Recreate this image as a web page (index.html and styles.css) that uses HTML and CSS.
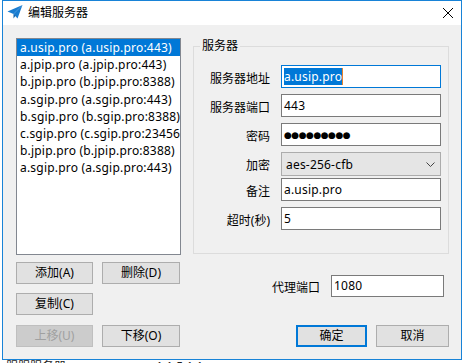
FILE: index.html
```html
<!DOCTYPE html>
<html lang="zh-CN">
<head>
    <meta charset="UTF-8">
    <title>编辑服务器</title>
    <link rel="stylesheet" href="styles.css">
</head>
<body>
    <div class="window">
        <div class="titlebar">
            <svg class="app_icon" width="16" height="16" viewBox="0 0 16 16">
                <path d="M0.5 7.5 L15.5 1 L6.5 10 Z" fill="#1a7dd0"/>
                <path d="M6.5 10 L15.5 1 L10.5 14.5 Z" fill="#1a7dd0"/>
                <path d="M6.5 10 L6.5 14.5 L8.5 11.8 Z" fill="#0f5fa6"/>
            </svg>
            <span class="title">编辑服务器</span>
            <svg class="close" width="10" height="10" viewBox="0 0 10 10">
                <path d="M0 0 L10 10 M10 0 L0 10" stroke="#000" stroke-width="1"/>
            </svg>
        </div>
        <div class="content">
            <div class="left">
                <ul class="server_list">
                    <li class="selected">a.usip.pro (a.usip.pro:443)</li>
                    <li>a.jpip.pro (a.jpip.pro:443)</li>
                    <li>b.jpip.pro (b.jpip.pro:8388)</li>
                    <li>a.sgip.pro (a.sgip.pro:443)</li>
                    <li>b.sgip.pro (b.sgip.pro:8388)</li>
                    <li>c.sgip.pro (c.sgip.pro:23456)</li>
                    <li>b.jpip.pro (b.jpip.pro:8388)</li>
                    <li>a.sgip.pro (a.sgip.pro:443)</li>
                </ul>
                <div class="list_buttons">
                    <button class="btn">添加(A)</button>
                    <button class="btn">删除(D)</button>
                    <button class="btn">复制(C)</button>
                    <span></span>
                    <button class="btn move" disabled>上移(U)</button>
                    <button class="btn move">下移(O)</button>
                </div>
            </div>
            <div class="right">
                <fieldset class="group">
                    <legend>服务器</legend>
                    <div class="fields">
                        <label>服务器地址</label>
                        <div class="box focused"><span class="sel">a.usip.pro</span><span class="caret"></span></div>
                        <label>服务器端口</label>
                        <div class="box">443</div>
                        <label>密码</label>
                        <div class="box dots">●●●●●●●●●</div>
                        <label>加密</label>
                        <div class="combo">
                            <span>aes-256-cfb</span>
                            <svg width="9" height="5" viewBox="0 0 9 5">
                                <polyline points="0.5,0.5 4.5,4.5 8.5,0.5" fill="none" stroke="#444" stroke-width="1"/>
                            </svg>
                        </div>
                        <label class="after_combo">备注</label>
                        <div class="box after_combo">a.usip.pro</div>
                        <label>超时(秒)</label>
                        <div class="box">5</div>
                    </div>
                </fieldset>
                <div class="proxy_row">
                    <label>代理端口</label>
                    <div class="box proxy">1080</div>
                </div>
                <div class="dialog_buttons">
                    <button class="btn ok">确定</button>
                    <button class="btn cancel">取消</button>
                </div>
            </div>
        </div>
    </div>
    <div class="desktop">
        <span class="frag1">服服服务器</span>
        <span class="frag2">1.1.5.1.1</span>
    </div>
</body>
</html>
```
FILE: styles.css
```css
*{
    margin:0;
    padding:0;
    box-sizing: border-box;
}
body{
    background: #fff;
    font-family: "Noto Sans", "Noto Sans CJK SC", sans-serif;
    font-size: 12px;
    color: #000;
    overflow: hidden;
}
li{
    list-style: none;
}
.window{
    margin-left: 2px;
    width: 460px;
    height: 360px;
    border: 1px solid #1883d7;
    background: #f0f0f0;
}
.titlebar{
    height: 24px;
    background: #fff;
    display: flex;
    align-items: center;
    padding-left: 4px;
    padding-right: 8px;
}
.app_icon{
    margin-top: -2px;
}
.title{
    margin-left: 5px;
    line-height: 16px;
}
.close{
    margin-left: auto;
    margin-top: -1px;
}
.content{
    display: flex;
    gap: 12px;
    padding: 13px 12px 0 13px;
}
.left{
    width: 165px;
}
.server_list{
    height: 217px;
    background: #fff;
    border: 1px solid #828790;
    overflow: hidden;
    letter-spacing: 0.2px;
}
.server_list li{
    height: 17.2px;
    line-height: 17px;
    padding-left: 3px;
    white-space: nowrap;
}
.server_list li.selected{
    background: #0078d7;
    color: #fff;
}
.btn{
    font-family: "Noto Sans", "Noto Sans CJK SC", sans-serif;
    font-size: 12px;
    background: #e1e1e1;
    border: 1px solid #adadad;
    color: #000;
    height: 22px;
    line-height: 18px;
}
.btn:disabled{
    background: #cccccc;
    border-color: #bfbfbf;
    color: #a0a0a0;
}
.list_buttons{
    margin-top: 7px;
    display: grid;
    grid-template-columns: 77px 78px;
    grid-template-rows: 22px 22px 22px;
    column-gap: 9px;
    row-gap: 9px;
}
.list_buttons .move{
    margin-top: 1px;
}
.right{
    width: 256px;
}
.group{
    border: 1px solid #dcdcdc;
    padding: 11px 0 23px 0;
}
.group legend{
    margin-left: 6px;
    padding: 0 2px;
    line-height: 16px;
}
.fields{
    display: grid;
    grid-template-columns: 76px 160px;
    column-gap: 11px;
    row-gap: 6px;
    align-items: center;
}
.fields label{
    text-align: right;
    padding-top: 2px;
    white-space: nowrap;
}
.fields .after_combo{
    margin-top: -4px;
}
.box{
    height: 23px;
    background: #fff;
    border: 1px solid #7a7a7a;
    padding-left: 2px;
    line-height: 20px;
    white-space: nowrap;
    display: flex;
    align-items: center;
    letter-spacing: 0.2px;
}
.box.focused{
    border-color: #0078d7;
}
.sel{
    background: #0078d7;
    color: #fff;
    line-height: 17px;
}
.caret{
    display: inline-block;
    width: 1px;
    height: 17px;
    background: #e8832a;
}
.box.dots{
    font-family: "DejaVu Sans", sans-serif;
    font-size: 9px;
    letter-spacing: -0.5px;
}
.combo{
    height: 24px;
    background: #e5e5e5;
    border: 1px solid #acacac;
    display: flex;
    align-items: center;
    justify-content: space-between;
    padding: 0 5px 0 4px;
    letter-spacing: 0.2px;
}
.proxy_row{
    margin-top: 21px;
    display: flex;
    justify-content: flex-end;
    align-items: center;
    gap: 11px;
    padding-right: 5px;
}
.proxy_row label{
    padding-top: 2px;
}
.box.proxy{
    width: 113px;
    height: 22px;
}
.dialog_buttons{
    margin-top: 28px;
    display: flex;
    justify-content: flex-end;
    gap: 9px;
}
.ok{
    width: 71px;
    border: 2px solid #0078d7;
}
.cancel{
    width: 73px;
}
.desktop{
    height: 3px;
    overflow: hidden;
    display: flex;
    line-height: 14px;
    color: #222;
}
.frag1{
    margin-left: 6px;
}
.frag2{
    margin-left: 90px;
}
```
